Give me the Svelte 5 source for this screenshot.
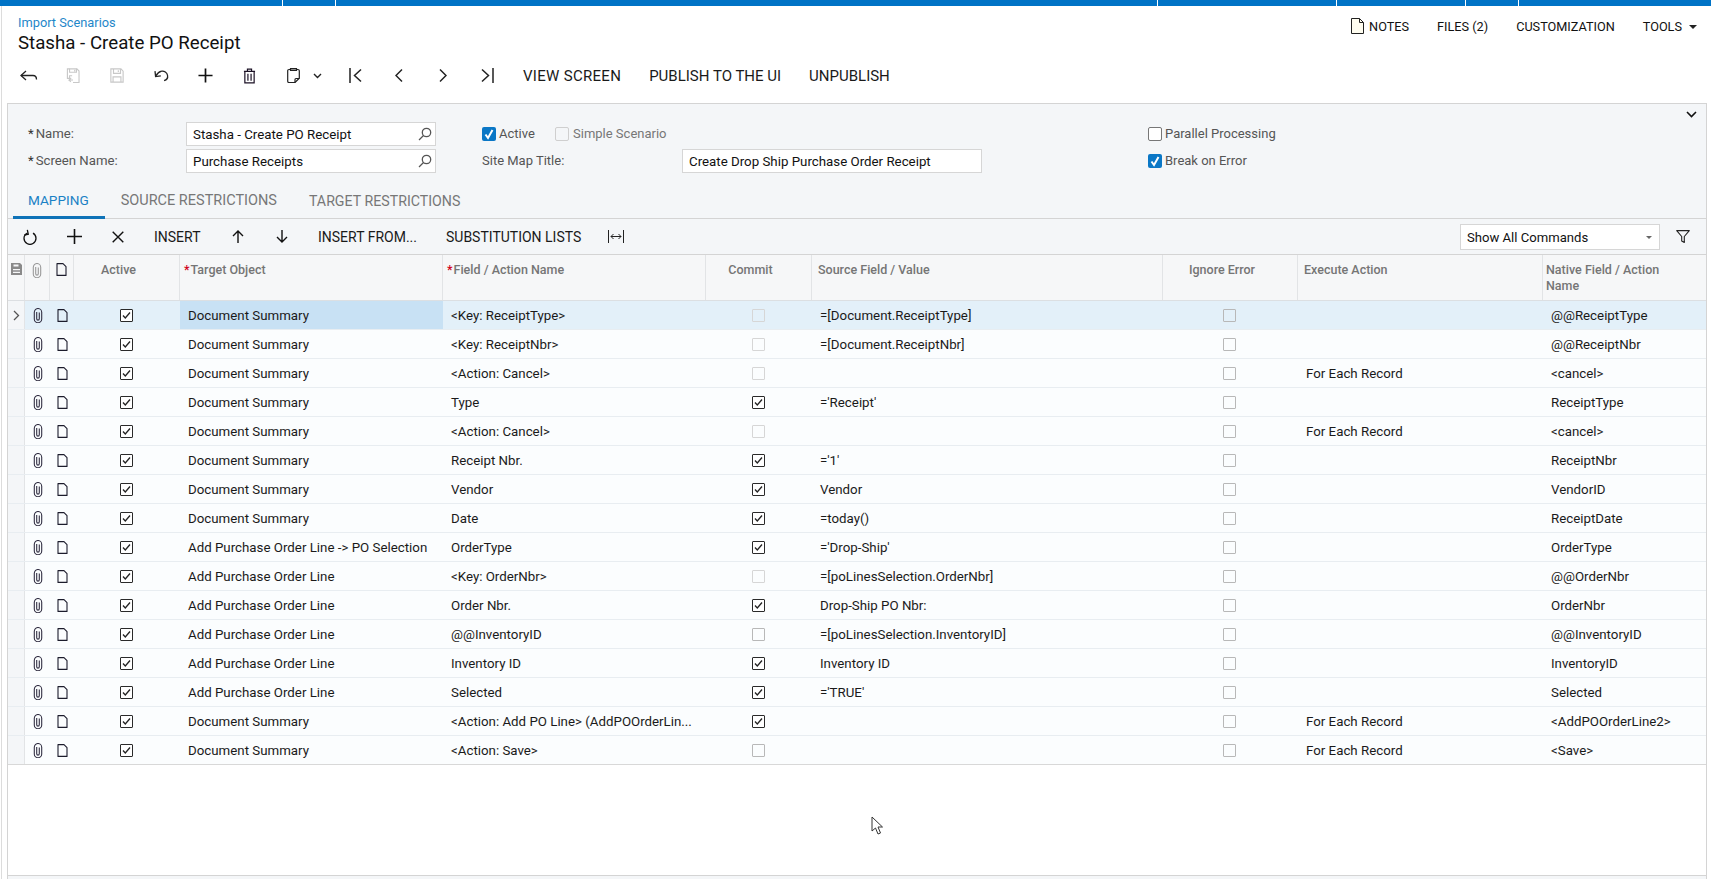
<script>
  const segs = [282, 52, 821, 178, 128, 52];
  const rows = [
    ['Document Summary','<Key: ReceiptType>',0,'=[Document.ReceiptType]','','@@ReceiptType',1],
    ['Document Summary','<Key: ReceiptNbr>',0,'=[Document.ReceiptNbr]','','@@ReceiptNbr',1],
    ['Document Summary','<Action: Cancel>',0,'','For Each Record','<cancel>',1],
    ['Document Summary','Type',1,"='Receipt'",'','ReceiptType',0],
    ['Document Summary','<Action: Cancel>',0,'','For Each Record','<cancel>',1],
    ['Document Summary','Receipt Nbr.',1,"='1'",'','ReceiptNbr',0],
    ['Document Summary','Vendor',1,'Vendor','','VendorID',0],
    ['Document Summary','Date',1,'=today()','','ReceiptDate',0],
    ['Add Purchase Order Line -> PO Selection','OrderType',1,"='Drop-Ship'",'','OrderType',0],
    ['Add Purchase Order Line','<Key: OrderNbr>',0,'=[poLinesSelection.OrderNbr]','','@@OrderNbr',1],
    ['Add Purchase Order Line','Order Nbr.',1,'Drop-Ship PO Nbr:','','OrderNbr',0],
    ['Add Purchase Order Line','@@InventoryID',0,'=[poLinesSelection.InventoryID]','','@@InventoryID',0],
    ['Add Purchase Order Line','Inventory ID',1,'Inventory ID','','InventoryID',0],
    ['Add Purchase Order Line','Selected',1,"='TRUE'",'','Selected',0],
    ['Document Summary','<Action: Add PO Line> (AddPOOrderLin...',1,'','For Each Record','<AddPOOrderLine2>',0],
    ['Document Summary','<Action: Save>',0,'','For Each Record','<Save>',0],
  ];
</script>

{#snippet clip(c)}
  <svg width="10" height="15" viewBox="0 0 10 15" fill="none" stroke={c} stroke-width="1.1"><path d="M6.300 4.500v6.300a1.300 1.300 0 0 1-2.600 0V4" /><path d="M1.300 4.200a3.700 3.700 0 0 1 7.400 0v6.800a3.700 3.700 0 0 1-7.400 0z" /></svg>
{/snippet}
{#snippet doc(w, h)}
  <svg width={w} height={h} viewBox="0 0 11 13" fill="none" stroke="#1c1c2c" stroke-width="1.1"><path d="M1 .6h6l3 3v8.800H1z" stroke-linejoin="round" /></svg>
{/snippet}
{#snippet check()}
  <span class="gc dark"><svg width="13" height="13" viewBox="0 0 13 13" fill="none" stroke="#222" stroke-width="1.300"><path d="M3 6.500 5.300 9 10 3.500" /></svg></span>
{/snippet}
{#snippet search()}
  <svg width="14" height="14" viewBox="0 0 14 14" fill="none" stroke="#555" stroke-width="1.3"><circle cx="8.500" cy="5.500" r="4.200" /><path d="M5.500 8.500 1 13" /></svg>
{/snippet}
{#snippet tick()}
  <svg width="14" height="14" viewBox="0 0 14 14" fill="none" stroke="#fff" stroke-width="2"><path d="M3.500 7.500 6 11l4.500-8" /></svg>
{/snippet}

<div class="topbar">
  {#each segs as w}<i style="width:{w}px"></i>{/each}
  <i class="rest"></i>
</div>

<div class="page">
  <header class="head">
    <div class="titles">
      <a class="crumb" href="#top">Import Scenarios</a>
      <h1>Stasha - Create PO Receipt</h1>
    </div>
    <nav class="links">
      <span class="notes">
        <svg width="13" height="16" viewBox="0 0 13 16" fill="#fffdf0" stroke="#222" stroke-width="1"><path d="M.5.500h8l4 4v11H.5z" /><path d="M8.500.500v4h4" fill="none" /></svg>
        NOTES
      </span>
      <span>FILES (2)</span>
      <span>CUSTOMIZATION</span>
      <span class="tools">TOOLS <b class="caret"></b></span>
    </nav>
  </header>

  <div class="toolbar main">
    <button aria-label="Back"><svg width="20" height="16" viewBox="0 0 20 16" fill="none" stroke="#222" stroke-width="1.3"><path d="M7 3 2 7.500l5 4.500" /><path d="M2 7.500h12c2.500 0 3.500 1.500 3.500 4" /></svg></button>
    <button aria-label="Save and back"><svg width="14" height="15.500" viewBox="0 0 16 18" fill="none" stroke="#c8c8c8" stroke-width="1.300"><path d="M6 12H1.500V1h11L15 3.500V17H8" /><path d="M4 1v4h8V1M10 2v2" /><path d="M7 9H4v3M8 14H3.500l2-2M3.500 14l2 2" /></svg></button>
    <button aria-label="Save"><svg width="14" height="15" viewBox="0 0 16 17" fill="none" stroke="#c8c8c8" stroke-width="1.300"><path d="M1 1h11.500L15 3.500V16H1z" /><path d="M4 1v5h8V1M9.500 2.500v2M3.500 16V10h9v6" /></svg></button>
    <button aria-label="Undo"><svg width="17" height="13" viewBox="0 0 18 15" fill="none" stroke="#222" stroke-width="1.500"><path d="M12 13.500c3-1 4.500-3.200 4-6C15.500 4 12 1.800 9 2.500 6.500 3 4 5.500 2.500 8" /><path d="M1.500 2.500 2.200 8.800l6-.8" /></svg></button>
    <button aria-label="Add"><svg width="15" height="15" viewBox="0 0 16 16" stroke="#111" stroke-width="1.800"><path d="M8 .5v15M.5 8h15" /></svg></button>
    <button aria-label="Delete"><svg width="13" height="16" viewBox="0 0 14 17" fill="none" stroke="#1c1226" stroke-width="1.300"><path d="M1 3.500h12M2 3.500V16h10V3.500M4.800 3.200V1h4.400v2.200" /><path d="M5.300 6v7.500M8.700 6v7.500" /></svg></button>
    <button aria-label="Clipboard"><svg width="13" height="15" viewBox="0 0 13 15" fill="none" stroke="#222" stroke-width="1.200"><path d="M3.500 1.500H2C1.200 1.500.7 2 .7 2.800v10.400c0 .8.500 1.300 1.300 1.300h6l4.300-4.300V2.800c0-.8-.5-1.300-1.300-1.300H9.500" /><path d="M3.500.7h6v1.600h-6zM8 14.500v-3c0-.5.400-1 1-1h3.300" /></svg></button>
    <button class="mini" aria-label="More"><svg width="9" height="6" viewBox="0 0 9 6" fill="none" stroke="#222" stroke-width="1.4"><path d="M1 1l3.500 3.500L8 1" /></svg></button>
    <button aria-label="First"><svg width="13" height="15" viewBox="0 0 13 15" fill="none" stroke="#222" stroke-width="1.5"><path d="M1 0v15M12 1.500 5.500 7.500l6.500 6" /></svg></button>
    <button aria-label="Previous"><svg width="8" height="15" viewBox="0 0 8 15" fill="none" stroke="#222" stroke-width="1.5"><path d="M7 1.500 1 7.500l6 6" /></svg></button>
    <button aria-label="Next"><svg width="8" height="15" viewBox="0 0 8 15" fill="none" stroke="#222" stroke-width="1.5"><path d="M1 1.500l6 6-6 6" /></svg></button>
    <button aria-label="Last"><svg width="13" height="15" viewBox="0 0 13 15" fill="none" stroke="#222" stroke-width="1.5"><path d="M12 0v15M1 1.500l6.500 6-6.500 6" /></svg></button>
    <span class="tb v">VIEW SCREEN</span>
    <span class="tb p">PUBLISH TO THE UI</span>
    <span class="tb">UNPUBLISH</span>
  </div>

  <section class="panel">
    <svg class="collapse" width="11" height="7" viewBox="0 0 11 7" fill="none" stroke="#111" stroke-width="1.6"><path d="M1 1l4.500 4.500L10 1" /></svg>
    <div class="form">
      <div class="fcol c1">
        <div class="frow">
          <label class="lbl" for="n"><em>*</em>Name:</label>
          <div class="input w250"><span id="n">Stasha - Create PO Receipt</span>{@render search()}</div>
        </div>
        <div class="frow">
          <label class="lbl" for="s"><em>*</em>Screen Name:</label>
          <div class="input w250"><span id="s">Purchase Receipts</span>{@render search()}</div>
        </div>
      </div>
      <div class="fcol c2">
        <div class="frow">
          <span class="cb on">{@render tick()}</span><span class="clabel a">Active</span>
          <span class="cb dis"></span><span class="clabel light">Simple Scenario</span>
        </div>
        <div class="frow">
          <span class="lbl sm">Site Map Title:</span>
          <div class="input w300"><span>Create Drop Ship Purchase Order Receipt</span></div>
        </div>
      </div>
      <div class="fcol c3">
        <div class="frow"><span class="cb off"></span><span class="clabel">Parallel Processing</span></div>
        <div class="frow"><span class="cb on">{@render tick()}</span><span class="clabel">Break on Error</span></div>
      </div>
    </div>

    <div class="tabs">
      <span class="tab active">MAPPING</span>
      <span class="tab">SOURCE RESTRICTIONS</span>
      <span class="tab">TARGET RESTRICTIONS</span>
    </div>

    <div class="toolbar grid-tb">
      <button aria-label="Refresh"><svg width="14" height="16" viewBox="0 0 14 16" fill="none" stroke="#111" stroke-width="1.3"><path d="M4.500 4C2.500 5 1 7 1 9.300a6 6 0 1 0 9-5.200" /><path d="M5 .8v4.400H1" transform="rotate(-12 5 4)" /></svg></button>
      <button aria-label="Add row"><svg width="15" height="15" viewBox="0 0 15 15" stroke="#111" stroke-width="1.6"><path d="M7.500 0v15M0 7.500h15" /></svg></button>
      <button aria-label="Delete row"><svg width="12" height="12" viewBox="0 0 12 12" stroke="#111" stroke-width="1.4"><path d="M.7.700l10.600 10.600M11.300.700.700 11.300" /></svg></button>
      <span class="tb ins">INSERT</span>
      <button class="arrow" aria-label="Up"><svg width="12" height="13" viewBox="0 0 12 13" fill="none" stroke="#111" stroke-width="1.4"><path d="M6 13V1M1 6l5-5 5 5" /></svg></button>
      <button class="arrow" aria-label="Down"><svg width="12" height="13" viewBox="0 0 12 13" fill="none" stroke="#111" stroke-width="1.4"><path d="M6 0v12M1 7l5 5 5-5" /></svg></button>
      <span class="tb from">INSERT FROM...</span>
      <span class="tb subst">SUBSTITUTION LISTS</span>
      <svg class="fit" width="16" height="13" viewBox="0 0 16 13" fill="none" stroke="#222" stroke-width="1"><path d="M.5 0v13M15.500 0v13M3 6.500h10M5.500 4 3 6.500 5.500 9M10.500 4 13 6.500 10.500 9" /></svg>
      <div class="select"><span>Show All Commands</span><b class="caret gray"></b></div>
      <svg class="filter" width="14" height="13" viewBox="0 0 14 13" fill="none" stroke="#222" stroke-width="1.1"><path d="M.7.600h12.600L8.300 6.500v6l-2.600-1.500V6.500z" stroke-linejoin="round" /></svg>
    </div>

    <div class="table">
      <div class="tr thead">
        <div class="th ico first"><svg width="11" height="12" viewBox="0 0 11 12" fill="#8a8a8a"><path d="M0 0h9l2 2v10H0zM2.500 1.500v2h5v-2zM2 6v1.300h7V6zM2 8.700V10h7V8.700z" fill-rule="evenodd" /></svg></div>
        <div class="th ico">{@render clip('#9a9a9a')}</div>
        <div class="th ico">{@render doc(11, 13)}</div>
        <div class="th center">Active</div>
        <div class="th star"><em>*</em>Target Object</div>
        <div class="th star"><em>*</em>Field / Action Name</div>
        <div class="th center">Commit</div>
        <div class="th">Source Field / Value</div>
        <div class="th center">Ignore Error</div>
        <div class="th">Execute Action</div>
        <div class="th last">Native Field / Action<br />Name</div>
      </div>
      {#each rows as r, i}
        <div class="tr row" class:sel={i === 0}>
          <div class="td ico first">{#if i === 0}<svg width="7" height="11" viewBox="0 0 7 11" fill="none" stroke="#555" stroke-width="1.3"><path d="M1 1l4.500 4.500L1 10" /></svg>{/if}</div>
          <div class="td ico">{@render clip('#333044')}</div>
          <div class="td ico">{@render doc(11, 13)}</div>
          <div class="td ctr">{@render check()}</div>
          <div class="td txt" class:cell={i === 0}>{r[0]}</div>
          <div class="td txt">{r[1]}</div>
          <div class="td ctr">
            {#if r[2]}{@render check()}
            {:else}<span class="gc" class:lt={r[6]} class:md={!r[6]}></span>{/if}
          </div>
          <div class="td txt">{r[3]}</div>
          <div class="td ctr"><span class="gc md"></span></div>
          <div class="td txt">{r[4]}</div>
          <div class="td txt">{r[5]}</div>
        </div>
      {/each}
    </div>
    <div class="empty">
      <svg class="cursor" width="13" height="20" viewBox="0 0 13 20" fill="#fff" stroke="#333" stroke-width="1"><path d="M1 1v14l3.500-3 2.500 6 2.500-1-2.500-6h4.500z" /></svg>
    </div>
  </section>
</div>

<style>
  :global(body) { margin: 0; background: #fff; font-family: Roboto, "Liberation Sans", sans-serif; color: #1a1a1a; overflow: hidden; }
  .topbar { display: flex; gap: 1px; height: 6px; }
  .topbar i { display: block; background: #0073c6; flex: none; }
  .topbar .rest { flex: 1; }
  .page { margin-left: 1px; border-left: 1px solid #dcdcdc; height: 873px; display: flex; flex-direction: column; box-sizing: border-box; }
  .head { display: flex; justify-content: space-between; height: 47px; padding-left: 16px; }
  .titles { padding-top: 9px; }
  .crumb { display: block; color: #1f87c9; font-size: 12.8px; line-height: 15px; text-decoration: none; }
  h1 { margin: 3px 0 0; font-size: 18.7px; line-height: 20px; font-weight: 400; color: #111; }
  .links { display: flex; align-items: flex-start; padding-top: 13px; font-size: 12.7px; color: #111; line-height: 16px; }
  .links span { margin-right: 28px; }
  .notes { display: flex; gap: 5px; margin-top: -1px; line-height: 18px; }
  .links .tools { margin-right: 14px; display: flex; align-items: center; gap: 7px; }
  .caret { display: inline-block; border: 4px solid transparent; border-top-color: #222; border-bottom: 0; }
  .caret.gray { border-top-color: #666; border-width: 3.5px; border-bottom: 0; }
  button { all: unset; display: flex; align-items: center; justify-content: center; flex: none; }
  .toolbar { display: flex; align-items: center; }
  .main { height: 50px; padding: 0 0 5px 5px; box-sizing: border-box; flex: none; }
  .main button { width: 44px; height: 36px; }
  .main .mini { width: 16px; margin: 0 8px 0 -6px; }
  .tb { font-size: 14px; color: #1a1a1a; white-space: nowrap; }
  .main .tb { font-size: 15px; }
  .main .v { margin-left: 14px; margin-right: 28px; letter-spacing: .3px; }
  .main .p { margin-right: 28px; }

  .panel { margin-left: 5px; margin-right: 4px; border: 1px solid #d4d4d4; border-bottom: 0; background: #f4f6f8; flex: 1; display: flex; flex-direction: column; position: relative; }
  .collapse { position: absolute; right: 9px; top: 7px; }
  .form { display: flex; height: 79px; box-sizing: border-box; padding-top: 18px; flex: none; }
  .fcol { display: flex; flex-direction: column; gap: 3px; }
  .frow { display: flex; align-items: center; height: 24px; }
  .c1 { width: 474px; padding-left: 20px; box-sizing: border-box; }
  .c2 { width: 666px; }
  .lbl { font-size: 13.2px; color: #555; width: 158px; flex: none; padding-bottom: 2px; }
  .lbl em { font-style: normal; margin-right: 2px; color: #333; }
  .lbl.sm { width: 200px; font-size: 13px; }
  .input { background: #fff; border: 1px solid #d6d6d6; box-sizing: border-box; height: 24px; display: flex; align-items: center; justify-content: space-between; padding: 0 3px 0 6px; font-size: 13.3px; color: #111; }
  .w250 { width: 250px; }
  .w300 { width: 300px; }
  .cb { width: 14px; height: 14px; border-radius: 2px; box-sizing: border-box; flex: none; display: block; }
  .cb svg { display: block; }
  .cb.on { background: #0a77c6; }
  .cb.off { border: 1px solid #777; background: #fff; }
  .cb.dis { border: 1px solid #cfcfcf; }
  .clabel { font-size: 13px; color: #555; margin-left: 3px; padding-bottom: 2px; }
  .clabel.a { width: 56px; }
  .clabel.light { color: #777; margin-left: 4px; }

  .tabs { display: flex; height: 36px; flex: none; padding-left: 5px; border-bottom: 1px solid #d4d4d4; box-sizing: border-box; }
  .tab { padding: 2px 16px 0; font-size: 14.5px; color: #777; display: flex; align-items: center; height: 36px; box-sizing: border-box; border-bottom: 3px solid transparent; }
  .tab:last-child { font-size: 14.2px; }
  .tab.active { color: #1a81c5; border-bottom-color: #0f73b8; padding: 1px 16px 0 15px; font-size: 13.6px; }

  .grid-tb { height: 36px; flex: none; position: relative; border-bottom: 1px solid #d4d4d4; box-sizing: border-box; padding-left: 0; }
  .grid-tb button { width: 44px; height: 30px; }
  .grid-tb .ins { margin-left: 14px; width: 62px; }
  .grid-tb .arrow { width: 44px; }
  .grid-tb .from { margin-left: 14px; width: 128px; }
  .grid-tb .subst { width: 163px; }
  .fit { flex: none; margin-left: -1px; }
  .select { margin-left: auto; width: 200px; height: 26px; background: #fff; border: 1px solid #d6d6d6; box-sizing: border-box; display: flex; align-items: center; justify-content: space-between; padding: 1px 7px 0 6px; font-size: 13.1px; color: #111; }
  .filter { margin: 0 16px 0 16px; flex: none; }

  .table { flex: none; }
  .tr { display: grid; grid-template-columns: 17px 25px 24px 106px 263px 263px 106px 351px 135px 245px 163px; }
  .thead { height: 46px; background: #f6f7f8; border-bottom: 1px solid #dcdfe2; box-sizing: border-box; }
  .th { font-size: 12.5px; font-weight: 500; color: #757575; line-height: 16px; padding: 7px 5px 0 6px; border-right: 1px solid #e2e4e6; box-sizing: border-box; }
  .th.star { padding-left: 4px; }
  .th em { color: #d0021b; font-style: normal; margin-right: 1px; }
  .th.center { text-align: center; padding-right: 22px; }
  .th.last { border-right: 0; padding-left: 3px; }
  .th.ico, .td.ico { padding: 0; display: flex; justify-content: center; }
  .th.ico { padding-top: 8px; }
  .row { height: 29px; background: #fbfdfe; border-bottom: 1px solid #e8edf1; box-sizing: border-box; }
  .row:last-child { border-bottom-color: #d8d8d8; }
  .row.sel { background: #e3f0f9; }
  .td { display: flex; align-items: center; min-width: 0; font-size: 13.3px; color: #1a1a1a; white-space: nowrap; }
  .td.first { background: #f4f6f8; border-right: 1px solid #e2e4e6; }
  .txt { padding: 0 4px 0 8px; box-sizing: border-box; }
  .cell { background: #c8e1f4; }
  .ctr { justify-content: center; padding-right: 2px; box-sizing: border-box; }
  .gc { width: 13px; height: 13px; box-sizing: border-box; border: 1px solid #bdbdbd; display: block; background: #fff; border-radius: 1px; }
  .gc.lt { border-color: #d6d6d6; background: transparent; }
  .gc.md { border-color: #b8b8b8; background: transparent; }
  .gc.dark { border-color: #2a2a2a; }
  .gc svg { display: block; margin: -1px; }
  .empty { flex: 1; background: #fff; position: relative; border-bottom: 1px solid #d4d4d4; margin-bottom: 3px; }
  .cursor { position: absolute; left: 863px; top: 51px; }
</style>
